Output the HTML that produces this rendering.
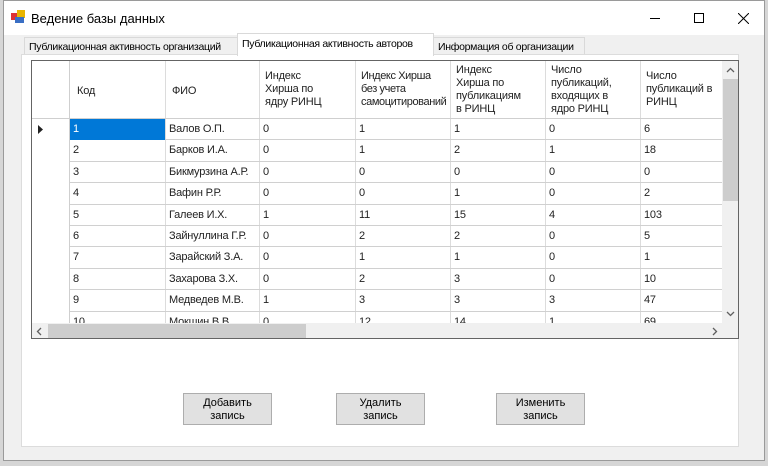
<!DOCTYPE html>
<html><head><meta charset="utf-8"><style>
*{box-sizing:border-box;margin:0;padding:0}
body{width:768px;height:466px;overflow:hidden;background:#d6d6d6;font-family:"Liberation Sans","DejaVu Sans",sans-serif;position:relative}
.win{position:absolute;left:3px;top:0;width:762px;height:461px;background:#f0f0f0;border:1px solid #9a9a9a}
.title{position:absolute;left:0;top:0;width:760px;height:34px;background:#fff}
.title .t{position:absolute;left:27px;top:10px;font-size:13px;color:#000}
.a{position:absolute}
.tab{position:absolute;font-size:10.5px;letter-spacing:-0.3px;color:#000;border:1px solid #d9d9d9;border-bottom:none;background:#f0f0f0;padding:3px 4px 0 4px;white-space:nowrap;overflow:hidden}
.page{position:absolute;left:21px;top:54px;width:718px;height:393px;background:#fff;border:1px solid #dcdcdc}
.grid{position:absolute;left:31px;top:60px;width:708px;height:279px;border:1px solid #646464;background:#fff;overflow:hidden}
.c{position:absolute;font-size:11px;letter-spacing:-0.2px;color:#222;white-space:nowrap;line-height:13px}
.vl{position:absolute;width:1px;background:#dcdcdc}
.hl{position:absolute;height:1px;background:#d0d0d0}
.btn{position:absolute;width:89px;height:32px;background:#e1e1e1;border:1px solid #adadad;font-size:11px;text-align:center;line-height:13px;padding-top:3px;color:#000}
</style></head><body>
<div class="win">
<div class="title">
 <svg class="a" style="left:7px;top:9px" width="14" height="14"><rect x="0" y="3" width="7" height="7" fill="#d33"/><rect x="6" y="0" width="8" height="8" fill="#e8b400"/><rect x="4" y="7" width="9" height="6" fill="#3a6fc4"/></svg>
 <div class="t">Ведение базы данных</div>
 <div class="a" style="left:646px;top:17px;width:10px;height:1px;background:#000"></div>
 <div class="a" style="left:690px;top:12px;width:10px;height:10px;border:1px solid #000"></div>
 <svg class="a" style="left:734px;top:12px" width="11" height="11"><path d="M0 0L11 11M11 0L0 11" stroke="#000" stroke-width="1"/></svg>
</div>
</div>
<div class="tab" style="left:24px;top:37px;width:214px;height:18px">Публикационная активность организаций</div>
<div class="tab" style="left:433px;top:37px;width:152px;height:18px">Информация об организации</div>
<div class="page"></div>
<div class="tab" style="left:237px;top:33px;width:197px;height:23px;background:#fff;border-color:#d9d9d9;padding-top:4px">Публикационная активность авторов</div>
<div class="grid">
 <div class="a" style="left:0;top:0;width:37px;height:279px;background:#fff"></div>
 <div class="vl" style="left:37px;top:0;height:263px;background:#cfcfcf"></div>
 <div class="vl" style="left:133px;top:0;height:263px"></div>
 <div class="vl" style="left:227px;top:0;height:263px"></div>
 <div class="vl" style="left:323px;top:0;height:263px"></div>
 <div class="vl" style="left:418px;top:0;height:263px"></div>
 <div class="vl" style="left:513px;top:0;height:263px"></div>
 <div class="vl" style="left:608px;top:0;height:263px"></div>
 <div class="hl" style="left:0;top:57px;width:690px;background:#cfcfcf"></div>
 <div class="c" style="left:45px;top:24px">Код</div>
 <div class="c" style="left:140px;top:24px">ФИО</div>
 <div class="c" style="left:233px;top:9px">Индекс<br>Хирша по<br>ядру РИНЦ</div>
 <div class="c" style="left:329px;top:9px;letter-spacing:-0.4px">Индекс Хирша<br>без учета<br>самоцитирований</div>
 <div class="c" style="left:424px;top:3px">Индекс<br>Хирша по<br>публикациям<br>в РИНЦ</div>
 <div class="c" style="left:519px;top:3px">Число<br>публикаций,<br>входящих в<br>ядро РИНЦ</div>
 <div class="c" style="left:614px;top:9px">Число<br>публикаций в<br>РИНЦ</div>
 <div id="rows"></div>
 <div class="a" style="left:38px;top:58px;width:95px;height:21px;background:#0078d7"></div>
 <div class="c" style="left:41px;top:62px;color:#fff">1</div>
 <svg class="a" style="left:6px;top:64px" width="6" height="9"><path d="M0 0L5 4.5L0 9Z" fill="#222"/></svg>
 <div class="a" style="left:690px;top:0;width:17px;height:262px;background:#f0f0f0"></div>
 <div class="a" style="left:691px;top:18px;width:15px;height:122px;background:#cdcdcd"></div>
 <svg class="a" style="left:694px;top:6px" width="9" height="6"><path d="M1 5L4.5 1.5L8 5" stroke="#606060" stroke-width="1.3" fill="none"/></svg>
 <svg class="a" style="left:694px;top:250px" width="9" height="6"><path d="M1 1L4.5 4.5L8 1" stroke="#606060" stroke-width="1.3" fill="none"/></svg>
 <div class="a" style="left:0;top:262px;width:690px;height:16px;background:#f0f0f0"></div>
 <div class="a" style="left:16px;top:263px;width:258px;height:14px;background:#cdcdcd"></div>
 <svg class="a" style="left:4px;top:266px" width="6" height="9"><path d="M5 1L1.5 4.5L5 8" stroke="#606060" stroke-width="1.3" fill="none"/></svg>
 <svg class="a" style="left:680px;top:266px" width="6" height="9"><path d="M1 1L4.5 4.5L1 8" stroke="#606060" stroke-width="1.3" fill="none"/></svg>
 <div class="a" style="left:690px;top:262px;width:17px;height:16px;background:#f0f0f0"></div>
</div>
<div class="btn" style="left:183px;top:393px">Добавить<br>запись</div>
<div class="btn" style="left:336px;top:393px">Удалить<br>запись</div>
<div class="btn" style="left:496px;top:393px">Изменить<br>запись</div>
<script>
var d=[["1","Валов О.П.","0","1","1","0","6"],["2","Барков И.А.","0","1","2","1","18"],["3","Бикмурзина А.Р.","0","0","0","0","0"],["4","Вафин Р.Р.","0","0","1","0","2"],["5","Галеев И.Х.","1","11","15","4","103"],["6","Зайнуллина Г.Р.","0","2","2","0","5"],["7","Зарайский З.А.","0","1","1","0","1"],["8","Захарова З.Х.","0","2","3","0","10"],["9","Медведев М.В.","1","3","3","3","47"],["10","Мокшин В.В.","0","12","14","1","69"]];
var xs=[41,137,231,327,422,517,612],h="";
for(var i=0;i<10;i++){var t=58+Math.round(i*21.4);
 if(i>0)h+='<div class="hl" style="left:38px;top:'+(t-1)+'px;width:652px"></div>';
 for(var j=0;j<7;j++)h+='<div class="c" style="left:'+xs[j]+'px;top:'+(t+4)+'px">'+d[i][j]+'</div>';}
document.getElementById('rows').innerHTML=h;
</script>
</body></html>
